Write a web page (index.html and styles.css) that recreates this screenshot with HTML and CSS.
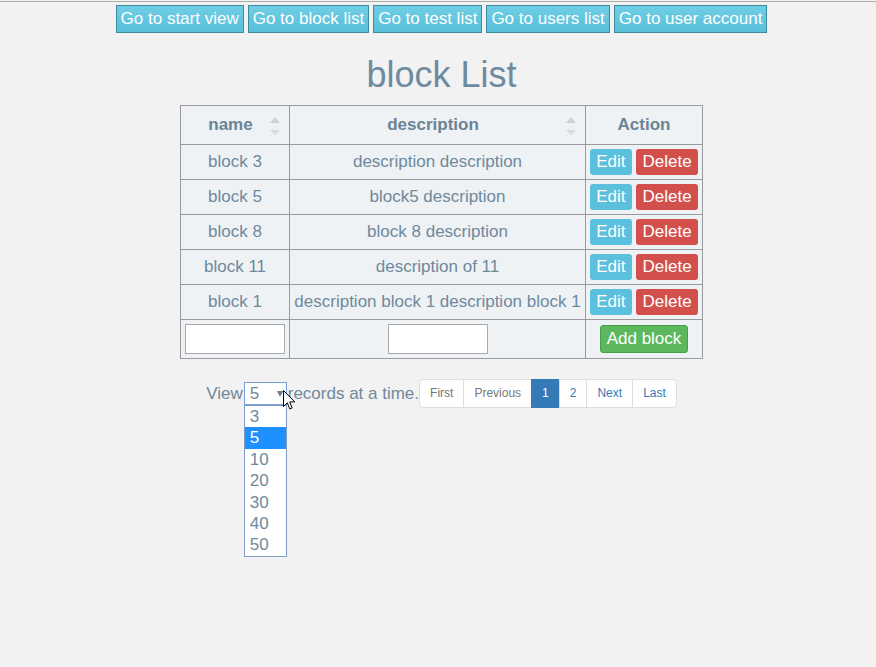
FILE: index.html
```html
<!DOCTYPE html>
<html>
<head>
<meta charset="utf-8">
<link rel="stylesheet" href="styles.css">
</head>
<body>
<div class="topline"></div>
<div class="page">
  <nav class="nav">
    <a class="nav-btn">Go to start view</a>
    <a class="nav-btn">Go to block list</a>
    <a class="nav-btn">Go to test list</a>
    <a class="nav-btn">Go to users list</a>
    <a class="nav-btn">Go to user account</a>
  </nav>
  <h1 class="title">block List</h1>
  <table class="grid">
    <colgroup>
      <col class="c-name"><col class="c-desc"><col class="c-act">
    </colgroup>
    <thead>
      <tr>
        <th class="sortable">name<span class="sort"><i class="up"></i><i class="down"></i></span></th>
        <th class="sortable">description<span class="sort"><i class="up"></i><i class="down"></i></span></th>
        <th>Action</th>
      </tr>
    </thead>
    <tbody>
      <tr><td>block 3</td><td>description description</td><td><span class="acts"><button class="btn edit">Edit</button><button class="btn del">Delete</button></span></td></tr>
      <tr><td>block 5</td><td>block5 description</td><td><span class="acts"><button class="btn edit">Edit</button><button class="btn del">Delete</button></span></td></tr>
      <tr><td>block 8</td><td>block 8 description</td><td><span class="acts"><button class="btn edit">Edit</button><button class="btn del">Delete</button></span></td></tr>
      <tr><td>block 11</td><td>description of 11</td><td><span class="acts"><button class="btn edit">Edit</button><button class="btn del">Delete</button></span></td></tr>
      <tr><td>block 1</td><td>description block 1 description block 1</td><td><span class="acts"><button class="btn edit">Edit</button><button class="btn del">Delete</button></span></td></tr>
      <tr class="add-row"><td><input class="field" type="text"></td><td><input class="field" type="text"></td><td><button class="btn add">Add block</button></td></tr>
    </tbody>
  </table>
  <div class="pager-row">
    <span class="lbl">View</span>
    <div class="select-wrap">
      <div class="select"><span>5</span><span class="arrow">&#9662;</span></div>
      <ul class="options">
        <li>3</li>
        <li class="sel">5</li>
        <li>10</li>
        <li>20</li>
        <li>30</li>
        <li>40</li>
        <li>50</li>
      </ul>
      <svg class="cursor" width="13" height="21" viewBox="0 0 13 21"><path d="M0.5 0.5 L0.5 16.5 L4.3 12.8 L6.8 19 L9.2 18 L6.7 11.9 L11.8 11.9 Z" fill="#fff" stroke="#000" stroke-width="1" stroke-linejoin="miter"/></svg>
    </div>
    <span class="lbl recs">records at a time.</span>
    <ul class="pagination">
      <li class="pg dis">First</li>
      <li class="pg dis">Previous</li>
      <li class="pg active">1</li>
      <li class="pg">2</li>
      <li class="pg">Next</li>
      <li class="pg">Last</li>
    </ul>
  </div>
</div>
</body>
</html>
```
FILE: styles.css
```css
html, body {
  margin: 0;
  padding: 0;
  background: #f2f2f2;
}
body {
  font-family: "Liberation Sans", Arial, sans-serif;
  color: #6f899c;
  width: 876px;
  height: 667px;
  overflow: hidden;
}
.topline {
  margin-top: 1px;
  height: 1px;
  background: #adadad;
}
.page {
  padding-left: 7px;
}
.nav {
  display: flex;
  justify-content: center;
  gap: 4px;
  padding-top: 3px;
}
.nav-btn {
  display: block;
  height: 26px;
  line-height: 26px;
  padding: 0 4px;
  font-size: 17px;
  color: #fff;
  border: 1px solid #3d8c9e;
  background: linear-gradient(#6fcee4, #58bfdb);
  white-space: nowrap;
}
.title {
  margin: 21px 0 9px;
  font-size: 36px;
  line-height: 42px;
  font-weight: normal;
  text-align: center;
  color: #6e8a9e;
}
.grid {
  margin: 0 auto;
  border-collapse: collapse;
  table-layout: fixed;
  width: 522px;
  background: #eef2f5;
}
.c-name { width: 109px; }
.c-desc { width: 296px; }
.c-act { width: 117px; }
.grid th, .grid td {
  border: 1px solid #9a9a9e;
  text-align: center;
  font-size: 17px;
  line-height: 20px;
  padding: 4px 4px;
  white-space: nowrap;
}
.grid th {
  padding: 9px 4px 9px;
  font-weight: bold;
  color: #6b8396;
}
.sortable {
  position: relative;
}
.grid th.sortable {
  padding-right: 13px;
}
.sort {
  position: absolute;
  right: 9px;
  top: 10px;
  width: 10px;
  height: 20px;
}
.sort i {
  position: absolute;
  left: 0;
  width: 0;
  height: 0;
  border-left: 5px solid transparent;
  border-right: 5px solid transparent;
}
.sort .up {
  top: 1px;
  border-bottom: 6px solid #ccd2d8;
}
.sort .down {
  top: 14px;
  border-top: 5px solid #d6dbe0;
}
.acts {
  display: flex;
  justify-content: center;
  gap: 4px;
}
.btn {
  font-family: "Liberation Sans", Arial, sans-serif;
  font-size: 17px;
  color: #fff;
  border: none;
  border-radius: 3px;
  height: 26px;
  line-height: 26px;
  padding: 0 6.5px;
  margin: 0;
  cursor: pointer;
}
.edit { background: #5bc0de; }
.del { background: #d24f4b; }
.add {
  background: #5cb85c;
  border: 1px solid #4a9e4a;
  height: 28px;
  line-height: 26px;
  padding: 0 6px;
}
.add-row td {
  padding: 4px 4px 4px;
}
.field {
  display: block;
  margin: 0 auto;
  box-sizing: border-box;
  width: 100px;
  height: 30px;
  border: 1px solid #a9a9a9;
  background: #fff;
  padding: 0;
}
.pager-row {
  display: flex;
  justify-content: center;
  align-items: center;
  margin-top: 20px;
  font-size: 17px;
}
.lbl {
  white-space: nowrap;
}
.recs {
  margin-left: 1px;
}
.select-wrap {
  position: relative;
  margin-left: 1px;
}
.select {
  box-sizing: border-box;
  width: 43px;
  height: 23px;
  border: 1px solid #7a9fd6;
  background: #fff;
  display: flex;
  justify-content: space-between;
  align-items: center;
  padding: 0 3px 0 5px;
  line-height: 21px;
}
.arrow {
  font-size: 12px;
  color: #6f7780;
}
.options {
  position: absolute;
  left: 0;
  top: 23px;
  margin: 0;
  padding: 0;
  list-style: none;
  width: 43px;
  box-sizing: border-box;
  border: 1px solid #7f9bc6;
  background: #fff;
}
.options li {
  height: 21.4px;
  line-height: 21.4px;
  padding-left: 5px;
}
.options li.sel {
  background: #1e90ff;
  color: #fff;
}
.cursor {
  position: absolute;
  left: 39px;
  top: 8px;
}
.pagination {
  display: flex;
  margin: 0;
  padding: 0;
  list-style: none;
}
.pg {
  font-size: 12px;
  line-height: 17px;
  padding: 5px 10px;
  border: 1px solid #dddddd;
  background: #fff;
  color: #337ab7;
  margin-left: -1px;
}
.pg:first-child {
  margin-left: 0;
  border-radius: 4px 0 0 4px;
}
.pg:last-child {
  border-radius: 0 4px 4px 0;
}
.pg.dis {
  color: #777777;
}
.pg.active {
  background: #337ab7;
  border-color: #337ab7;
  color: #fff;
}
```
